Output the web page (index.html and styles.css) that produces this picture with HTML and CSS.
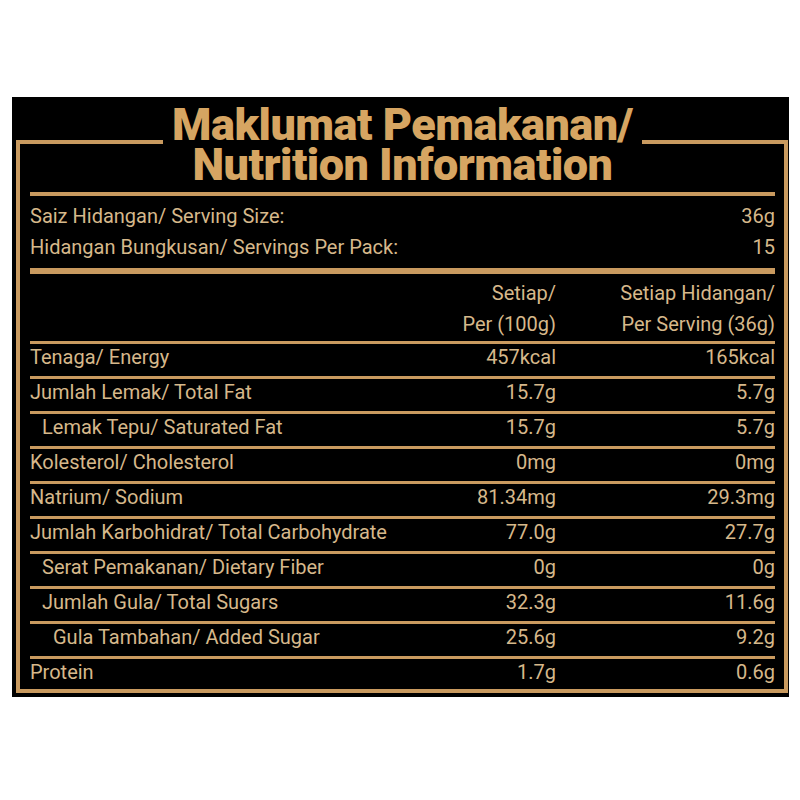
FILE: index.html
```html
<!DOCTYPE html>
<html lang="ms">
<head>
<meta charset="utf-8">
<title>Maklumat Pemakanan / Nutrition Information</title>
<link rel="stylesheet" href="styles.css">
</head>
<body>
<div class="panel">
  <div class="frame">
    <h1 class="title">Maklumat Pemakanan/<br>Nutrition Information</h1>
    <div class="serving">
      <div class="srow"><span>Saiz Hidangan/ Serving Size:</span><span>36g</span></div>
      <div class="srow"><span>Hidangan Bungkusan/ Servings Per Pack:</span><span>15</span></div>
    </div>
    <div class="table">
      <div class="head">
        <div></div>
        <div class="num">Setiap/<br>Per (100g)</div>
        <div class="num">Setiap Hidangan/<br>Per Serving (36g)</div>
      </div>
      <div class="row"><div class="lbl">Tenaga/ Energy</div><div class="num">457kcal</div><div class="num">165kcal</div></div>
      <div class="row"><div class="lbl">Jumlah Lemak/ Total Fat</div><div class="num">15.7g</div><div class="num">5.7g</div></div>
      <div class="row"><div class="lbl ind1">Lemak Tepu/ Saturated Fat</div><div class="num">15.7g</div><div class="num">5.7g</div></div>
      <div class="row"><div class="lbl">Kolesterol/ Cholesterol</div><div class="num">0mg</div><div class="num">0mg</div></div>
      <div class="row"><div class="lbl">Natrium/ Sodium</div><div class="num">81.34mg</div><div class="num">29.3mg</div></div>
      <div class="row"><div class="lbl">Jumlah Karbohidrat/ Total Carbohydrate</div><div class="num">77.0g</div><div class="num">27.7g</div></div>
      <div class="row"><div class="lbl ind1">Serat Pemakanan/ Dietary Fiber</div><div class="num">0g</div><div class="num">0g</div></div>
      <div class="row"><div class="lbl ind1">Jumlah Gula/ Total Sugars</div><div class="num">32.3g</div><div class="num">11.6g</div></div>
      <div class="row"><div class="lbl ind2">Gula Tambahan/ Added Sugar</div><div class="num">25.6g</div><div class="num">9.2g</div></div>
      <div class="row last"><div class="lbl">Protein</div><div class="num">1.7g</div><div class="num">0.6g</div></div>
    </div>
  </div>
</div>
</body>
</html>
```

FILE: styles.css
```css
* { box-sizing: border-box; }
html, body { margin: 0; padding: 0; background: #ffffff; }
body { font-family: Roboto, "Liberation Sans", sans-serif; }

.panel {
  margin: 97px 0 0 12px;
  width: 777px;
  height: 600px;
  background: #000000;
  padding: 43px 1px 0 4px;
}

.frame {
  border: 4px solid #c99a5f;
  padding: 0 9px 0 10px;
  color: #d6b88b;
  font-size: 20px;
}

.title {
  width: fit-content;
  margin: -39px auto 0;
  padding: 0 9px;
  background: #000000;
  color: #d6a562;
  font-family: Roboto, "Liberation Sans", sans-serif;
  font-weight: 900;
  font-size: 45px;
  line-height: 40px;
  text-align: center;
  letter-spacing: -0.5px;
}

.serving {
  margin-top: 7px;
  border-top: 4px solid #c99a5f;
  border-bottom: 6px solid #c99a5f;
  padding: 5px 0;
  line-height: 31px;
}

.srow {
  display: flex;
  justify-content: space-between;
}

.head, .row {
  display: grid;
  grid-template-columns: 1fr 160px 219px;
}

.head {
  padding: 4px 0 1px;
  line-height: 31px;
}

.row {
  border-top: 3px solid #c99a5f;
  line-height: 26px;
  padding-bottom: 6px;
}

.row.last { padding-bottom: 4px; }

.num { text-align: right; white-space: nowrap; }
.lbl { white-space: nowrap; }
.ind1 { padding-left: 12px; }
.ind2 { padding-left: 23px; }
```
